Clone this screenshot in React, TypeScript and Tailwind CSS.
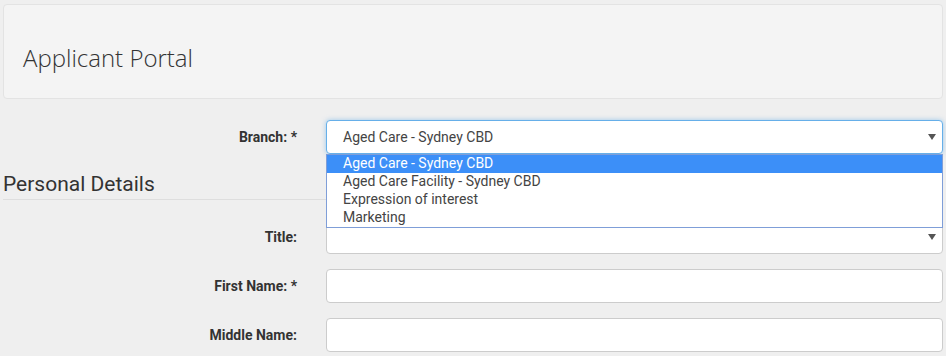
import React from "react";

function Arrow() {
  return (
    <svg width="8" height="6" viewBox="0 0 8 6" className="absolute right-[7px] top-1/2 -translate-y-1/2">
      <path d="M0 0 H8 L4 6 Z" fill="#555" />
    </svg>
  );
}

function Row({ label, children }: { label: string; children: React.ReactNode }) {
  return (
    <div className="flex items-center h-[34px]">
      <label className="w-[297px] text-right text-[14px] font-bold text-[#333]">{label}</label>
      <div className="ml-[29px] mr-[3px] flex-1 h-full relative">{children}</div>
    </div>
  );
}

export default function App() {
  const options = [
    "Aged Care - Sydney CBD",
    "Aged Care Facility - Sydney CBD",
    "Expression of interest",
    "Marketing",
  ];
  return (
    <div className="min-h-[356px] bg-[#efefef] font-['Roboto',sans-serif] text-[#333] overflow-hidden">
      <div className="px-[3px] pt-[4px]">
        <div className="h-[95px] rounded-[4px] border border-[#e3e3e3] bg-[#f4f4f4] pl-[19px] pt-[37px]">
          <h1 className="font-['Open_Sans',sans-serif] font-light text-[24px] leading-[32px] text-[#333]">
            Applicant Portal
          </h1>
        </div>
      </div>

      <div className="mt-[21px] relative z-10">
        <Row label="Branch: *">
          <div className="h-full rounded-[4px] border border-[#66afe9] bg-white shadow-[0_0_5px_rgba(102,175,233,0.6)] flex items-center pl-[16px] text-[14px] text-[#444]">
            Aged Care - Sydney CBD
            <Arrow />
          </div>
          <div className="absolute left-0 right-0 top-[34px] border border-[#7f9ed8] bg-white text-[14px] text-[#444]">
            {options.map((o, i) => (
              <div
                key={o}
                className={
                  "h-[18px] leading-[17px] pl-[16px] " +
                  (i === 0 ? "bg-[#3c8ff8] text-white" : "")
                }
              >
                {o}
              </div>
            ))}
          </div>
        </Row>
      </div>

      <div className="mt-[18px] ml-[3px] mr-[4px] border-b border-[#dedede] pb-[3px]">
        <h3 className="text-[21px] leading-[24px] font-normal text-[#333]">Personal Details</h3>
      </div>

      <div className="mt-[20px] flex flex-col gap-[15px]">
        <Row label="Title:">
          <div className="h-full rounded-[4px] border border-[#ccc] bg-white">
            <Arrow />
          </div>
        </Row>
        <Row label="First Name: *">
          <div className="h-full rounded-[4px] border border-[#ccc] bg-white" />
        </Row>
        <Row label="Middle Name:">
          <div className="h-full rounded-[4px] border border-[#ccc] bg-white" />
        </Row>
      </div>
    </div>
  );
}
